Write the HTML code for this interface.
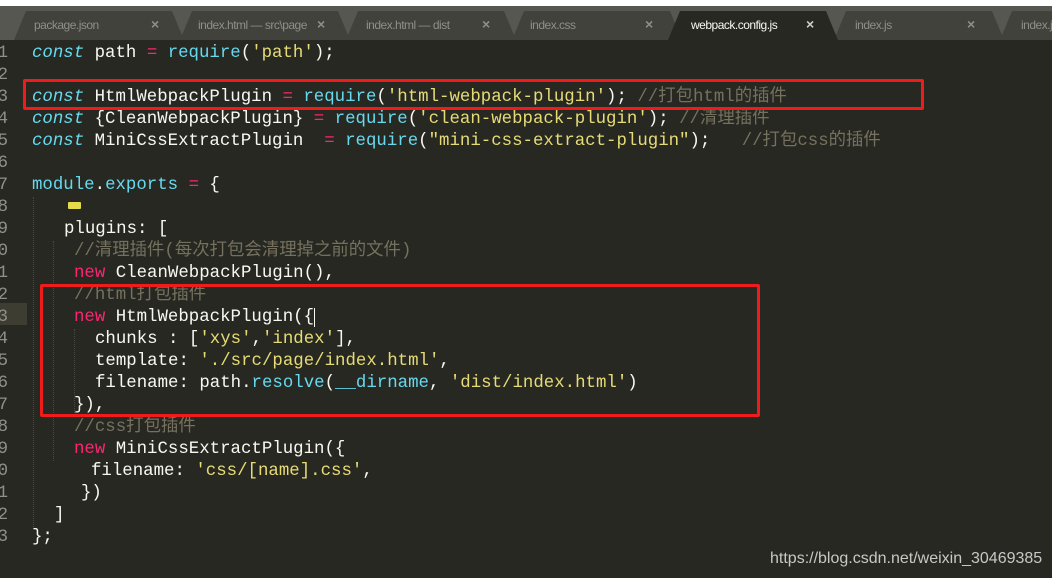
<!DOCTYPE html>
<html><head><meta charset="utf-8"><style>
html,body{margin:0;padding:0}
body{width:1052px;height:578px;overflow:hidden;background:#272822;position:relative;font-family:"Liberation Mono","Noto Sans CJK SC",monospace}
.top{position:absolute;left:0;top:0;width:1052px;height:6px;background:#fff}
.bar{position:absolute;left:0;top:6px;width:1052px;height:34px;background:#575752}
.tab{position:absolute;top:11px;height:29px;background:#42423d;clip-path:polygon(0 100%,12px 0,calc(100% - 12px) 0,100% 100%)}
.tab.act{background:#272822}
.tl{position:absolute;top:18px;font-family:"Liberation Sans",sans-serif;font-size:12px;color:#8f8f88;letter-spacing:-0.5px}
.tl.act{color:#f8f8f2}
.x{position:absolute;top:16px;font-family:"Liberation Sans",sans-serif;font-size:14px;color:#8f8f88;font-weight:bold}
.x.act{color:#d0d0cc}
.w{position:absolute;left:0;top:3px;width:1052px;height:575px}
.ln{position:absolute;left:-20px;width:28px;text-align:right;font-size:17.4px;color:#8f908a;line-height:22px}
.c{position:absolute;font-size:17.4px;line-height:22px;color:#f8f8f2;white-space:pre}
.k{color:#66d9ef;font-style:italic}
.f{color:#66d9ef}
.s{color:#e6db74}
.o{color:#f92672}
.m{color:#75715e}
.box{position:absolute;border:3px solid #f01c1c;border-radius:2px}
.g{position:absolute;width:0;border-left:1px dotted #4a4a44}
</style></head><body>
<div class="top"></div>
<div class="bar"></div>
<div class="tab" style="left:14px;width:170px"></div>
<div class="tab" style="left:180px;width:170px"></div>
<div class="tab" style="left:346px;width:170px"></div>
<div class="tab" style="left:512px;width:170px"></div>
<div class="tab" style="left:834px;width:170px"></div>
<div class="tab" style="left:1000px;width:170px"></div>
<div class="tab act" style="left:668px;width:170px"></div>
<div class="tl" style="left:34px">package.json</div><div class="x" style="left:151px">×</div>
<div class="tl" style="left:198px">index.html — src\page</div><div class="x" style="left:317px">×</div>
<div class="tl" style="left:366px">index.html — dist</div><div class="x" style="left:482px">×</div>
<div class="tl" style="left:530px">index.css</div><div class="x" style="left:645px">×</div>
<div class="tl act" style="left:691px">webpack.config.js</div><div class="x act" style="left:806px">×</div>
<div class="tl" style="left:855px">index.js</div><div class="x" style="left:967px">×</div>
<div class="tl" style="left:1021px">index.js</div>

<div style="position:absolute;left:0;top:303px;width:27px;height:22px;background:#3e3d32"></div>
<div class="w">
<div class="g" style="left:33px;top:194px;height:330px"></div>
<div class="g" style="left:53px;top:238px;height:220px"></div>
<div class="g" style="left:74px;top:326px;height:88px"></div>

<div class="ln" style="top:40px">1</div><div class="ln" style="top:62px">2</div><div class="ln" style="top:84px">3</div><div class="ln" style="top:106px">4</div><div class="ln" style="top:128px">5</div><div class="ln" style="top:150px">6</div><div class="ln" style="top:172px">7</div><div class="ln" style="top:194px">8</div><div class="ln" style="top:216px">9</div><div class="ln" style="top:238px">0</div><div class="ln" style="top:260px">1</div><div class="ln" style="top:282px">2</div><div class="ln" style="top:304px">3</div><div class="ln" style="top:326px">4</div><div class="ln" style="top:348px">5</div><div class="ln" style="top:370px">6</div><div class="ln" style="top:392px">7</div><div class="ln" style="top:414px">8</div><div class="ln" style="top:436px">9</div><div class="ln" style="top:458px">0</div><div class="ln" style="top:480px">1</div><div class="ln" style="top:502px">2</div><div class="ln" style="top:524px">3</div>

<div class="c" style="left:32px;top:40px"><span class="k">const</span> path <span class="o">=</span> <span class="f">require</span>(<span class="s">'path'</span>);</div>
<div class="c" style="left:32px;top:84px"><span class="k">const</span> HtmlWebpackPlugin <span class="o">=</span> <span class="f">require</span>(<span class="s">'html-webpack-plugin'</span>); <span class="m">//打包html的插件</span></div>
<div class="c" style="left:32px;top:106px"><span class="k">const</span> {CleanWebpackPlugin} <span class="o">=</span> <span class="f">require</span>(<span class="s">'clean-webpack-plugin'</span>); <span class="m">//清理插件</span></div>
<div class="c" style="left:32px;top:128px"><span class="k">const</span> MiniCssExtractPlugin  <span class="o">=</span> <span class="f">require</span>(<span class="s">"mini-css-extract-plugin"</span>);   <span class="m">//打包css的插件</span></div>
<div class="c" style="left:32px;top:172px"><span class="f">module</span>.<span class="f">exports</span> <span class="o">=</span> {</div>
<div style="position:absolute;left:68px;top:199px;width:13px;height:7px;background:#e6db4a;border-radius:1px"></div>
<div class="c" style="left:64px;top:216px">plugins: [</div>
<div class="c" style="left:74px;top:238px"><span class="m">//清理插件(每次打包会清理掉之前的文件)</span></div>
<div class="c" style="left:74px;top:260px"><span class="o">new</span> CleanWebpackPlugin(),</div>
<div class="c" style="left:74px;top:282px"><span class="m">//html打包插件</span></div>
<div class="c" style="left:74px;top:304px"><span class="o">new</span> HtmlWebpackPlugin({<span style="border-left:1px solid #f8f8f2"></span></div>
<div class="c" style="left:95px;top:326px">chunks : [<span class="s">'xys'</span>,<span class="s">'index'</span>],</div>
<div class="c" style="left:95px;top:348px">template: <span class="s">'./src/page/index.html'</span>,</div>
<div class="c" style="left:95px;top:370px">filename: path.<span class="f">resolve</span>(<span class="f">__dirname</span>, <span class="s">'dist/index.html'</span>)</div>
<div class="c" style="left:74px;top:392px">}),</div>
<div class="c" style="left:74px;top:414px"><span class="m">//css打包插件</span></div>
<div class="c" style="left:74px;top:436px"><span class="o">new</span> MiniCssExtractPlugin({</div>
<div class="c" style="left:91px;top:458px">filename: <span class="s">'css/[name].css'</span>,</div>
<div class="c" style="left:81px;top:480px">})</div>
<div class="c" style="left:54px;top:502px">]</div>
<div class="c" style="left:32px;top:524px">};</div>
</div>

<div class="box" style="left:23px;top:79px;width:895px;height:25px"></div>
<div class="box" style="left:40px;top:284px;width:714px;height:127px"></div>

<div style="position:absolute;left:770px;top:550px;font-family:'Liberation Sans',sans-serif;font-size:16px;color:#c8c8c4">https://blog.csdn.net/weixin_30469385</div>
</body></html>
